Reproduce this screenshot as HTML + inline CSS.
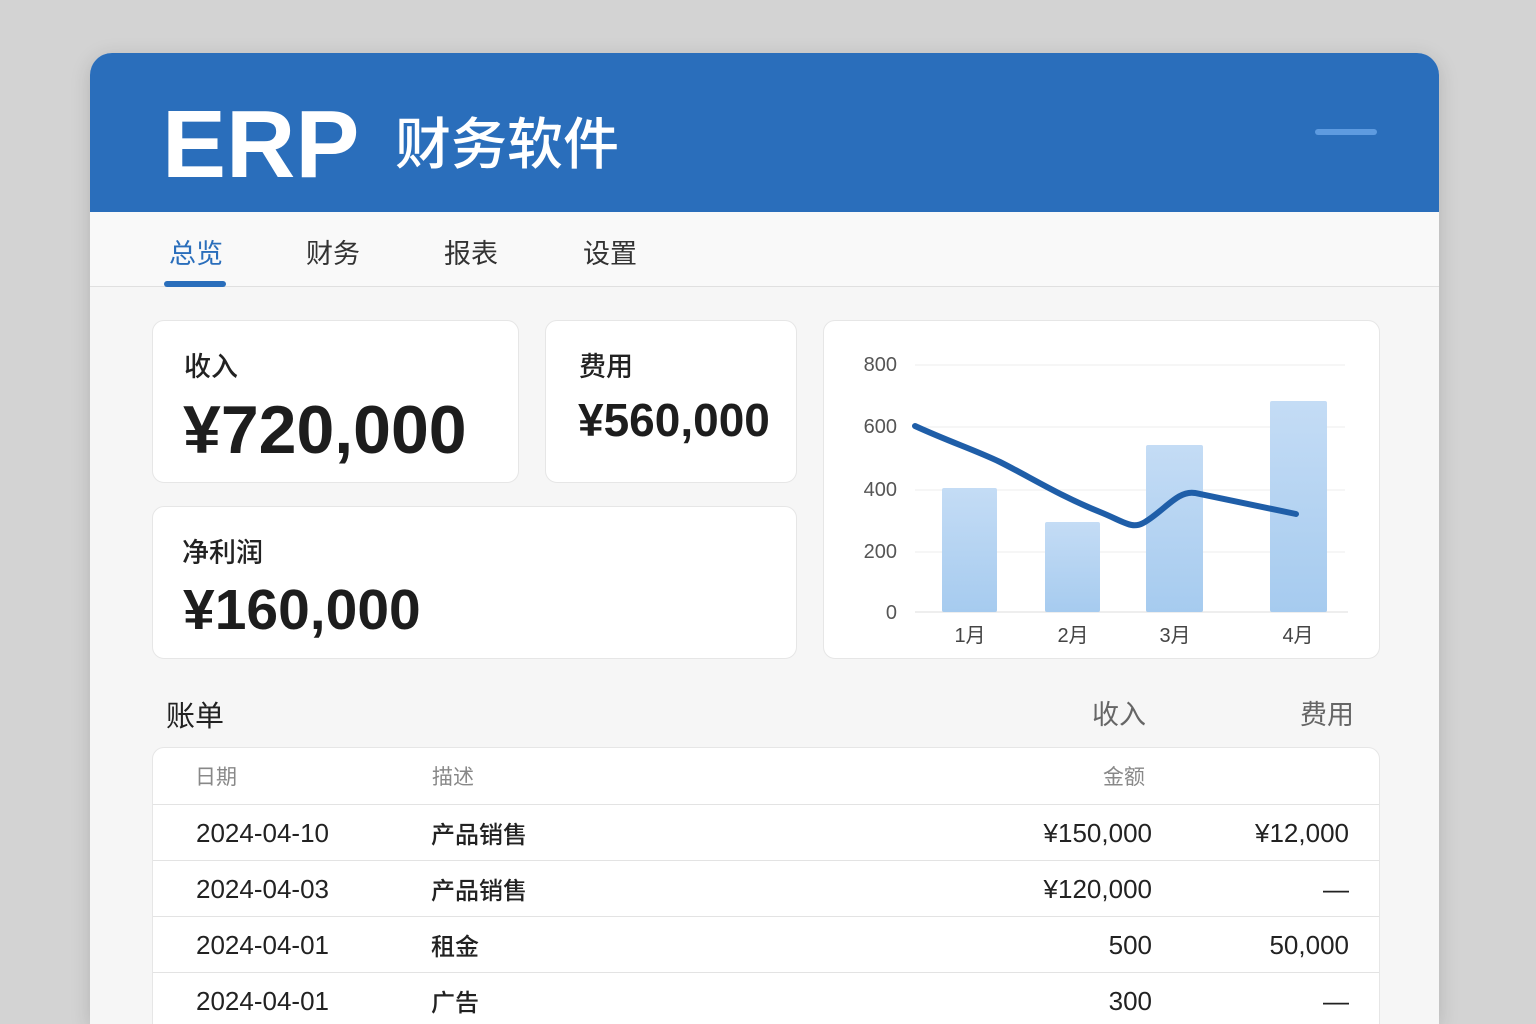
<!DOCTYPE html>
<html><head><meta charset="utf-8"><style>
*{margin:0;padding:0;box-sizing:border-box}
html,body{width:1536px;height:1024px;overflow:hidden}
body{background:#d3d3d3;font-family:"Liberation Sans","Noto Sans CJK SC",sans-serif;position:relative}
.win{position:absolute;left:90px;top:53px;width:1349px;height:971px;background:#f6f6f6;border-radius:22px 22px 0 0;overflow:hidden;box-shadow:0 4px 20px rgba(0,0,0,.15)}
.hdr{position:absolute;left:0;top:0;width:100%;height:159px;background:#2a6ebb}
.erp{position:absolute;left:72px;top:32px;font-size:96px;font-weight:bold;color:#fff;line-height:120px}
.sub{position:absolute;left:305px;top:50px;font-size:56px;color:#fff;line-height:76px;font-family:"Noto Sans CJK SC",sans-serif;font-weight:500}
.ham{position:absolute;left:1225px;top:76px;width:62px;height:6px;border-radius:3px;background:#5e9be0}
.tabs{position:absolute;left:0;top:159px;width:100%;height:75px;background:#f9f9f9;border-bottom:1px solid #e0e0e0}
.tab{position:absolute;top:20px;font-size:27px;color:#333;font-family:"Noto Sans CJK SC",sans-serif}
.ul{position:absolute;left:74px;top:69px;width:62px;height:6px;border-radius:3px;background:#2a6ebb}
.card{position:absolute;background:#fff;border:1px solid #e6e6e6;border-radius:12px}
.lbl{position:absolute;font-size:27px;color:#222;font-family:"Noto Sans CJK SC",sans-serif;font-weight:500}
.val{position:absolute;font-weight:bold;color:#1d1d1d}
.tbl{position:absolute;left:62px;top:694px;width:1228px;height:320px;background:#fff;border:1px solid #e6e6e6;border-radius:12px 12px 0 0}
.row{position:absolute;left:0;width:100%;height:56px;border-top:1px solid #e3e3e3;font-size:26px;color:#222}
.row span{position:absolute;top:0;line-height:56px;font-family:"Liberation Sans","Noto Sans CJK SC",sans-serif}
.row span.c{font-family:"Noto Sans CJK SC",sans-serif;font-size:24px;line-height:56px;font-weight:500}
</style></head><body>
<div class="win">
 <div class="hdr"><div class="erp">ERP</div><div class="sub">财务软件</div><div class="ham"></div></div>
 <div class="tabs">
  <div class="tab" style="left:79px;color:#2a6ebb">总览</div>
  <div class="tab" style="left:216px">财务</div>
  <div class="tab" style="left:354px">报表</div>
  <div class="tab" style="left:493px">设置</div>
  <div class="ul"></div>
 </div>
 <div class="card" style="left:62px;top:267px;width:367px;height:163px">
  <div class="lbl" style="left:31px;top:24px">收入</div>
  <div class="val" style="left:30px;top:70px;font-size:68px">¥720,000</div>
 </div>
 <div class="card" style="left:455px;top:267px;width:252px;height:163px">
  <div class="lbl" style="left:33px;top:24px">费用</div>
  <div class="val" style="left:32px;top:72px;font-size:46px">¥560,000</div>
 </div>
 <div class="card" style="left:62px;top:453px;width:645px;height:153px">
  <div class="lbl" style="left:29px;top:24px">净利润</div>
  <div class="val" style="left:30px;top:70px;font-size:57px">¥160,000</div>
 </div>
 <div class="card" style="left:733px;top:267px;width:557px;height:339px"></div>
 <svg style="position:absolute;left:0;top:0" width="1349" height="700" viewBox="90 53 1349 700">
  <g stroke="#ececec" stroke-width="1">
   <line x1="915" y1="365" x2="1345" y2="365"/><line x1="915" y1="427" x2="1345" y2="427"/>
   <line x1="915" y1="490" x2="1345" y2="490"/><line x1="915" y1="552" x2="1345" y2="552"/>
   <line x1="915" y1="612" x2="1348" y2="612" stroke="#ddd"/>
  </g>
  <g font-size="20" fill="#555" text-anchor="end" font-family="Liberation Sans,sans-serif">
   <text x="897" y="371">800</text><text x="897" y="433">600</text><text x="897" y="496">400</text><text x="897" y="558">200</text><text x="897" y="619">0</text>
  </g>
  <defs><linearGradient id="g" x1="0" y1="0" x2="0" y2="1"><stop offset="0" stop-color="#c4dcf5"/><stop offset="1" stop-color="#a6cbef"/></linearGradient></defs>
  <g fill="url(#g)">
   <rect x="942" y="488" width="55" height="124" rx="2"/><rect x="1045" y="522" width="55" height="90" rx="2"/>
   <rect x="1146" y="445" width="57" height="167" rx="2"/><rect x="1270" y="401" width="57" height="211" rx="2"/>
  </g>
  <path d="M915 426 C950 442 975 450 1000 462 C1030 477 1060 496 1100 512 C1125 522 1132 530 1145 522 C1165 510 1178 490 1195 493 L1296 514" fill="none" stroke="#1f5ea8" stroke-width="6" stroke-linecap="round"/>
  <g font-size="20" fill="#444" text-anchor="middle" font-family="Liberation Sans,Noto Sans CJK SC,sans-serif">
   <text x="970" y="642">1月</text><text x="1073" y="642">2月</text><text x="1175" y="642">3月</text><text x="1298" y="642">4月</text>
  </g>
 </svg>
 <div style="position:absolute;left:76px;top:640px;font-size:29px;color:#222;font-family:'Noto Sans CJK SC',sans-serif">账单</div>
 <div style="position:absolute;left:1002px;top:640px;font-size:27px;color:#666;font-family:'Noto Sans CJK SC',sans-serif">收入</div>
 <div style="position:absolute;left:1210px;top:640px;font-size:27px;color:#666;font-family:'Noto Sans CJK SC',sans-serif">费用</div>
 <div class="tbl">
  <div class="row" style="top:0;border-top:none;color:#888"><span class="c" style="left:42px;font-size:21px;font-weight:400">日期</span><span class="c" style="left:279px;font-size:21px;font-weight:400">描述</span><span class="c" style="left:950px;font-size:21px;font-weight:400">金额</span></div>
  <div class="row" style="top:56px"><span style="left:43px">2024-04-10</span><span class="c" style="left:278px">产品销售</span><span style="right:227px">¥150,000</span><span style="right:30px">¥12,000</span></div>
  <div class="row" style="top:112px"><span style="left:43px">2024-04-03</span><span class="c" style="left:278px">产品销售</span><span style="right:227px">¥120,000</span><span style="right:30px">—</span></div>
  <div class="row" style="top:168px"><span style="left:43px">2024-04-01</span><span class="c" style="left:278px">租金</span><span style="right:227px">500</span><span style="right:30px">50,000</span></div>
  <div class="row" style="top:224px"><span style="left:43px">2024-04-01</span><span class="c" style="left:278px">广告</span><span style="right:227px">300</span><span style="right:30px">—</span></div>
 </div>
</div>
</body></html>
